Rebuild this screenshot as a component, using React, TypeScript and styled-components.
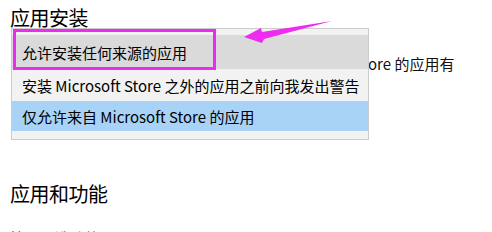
import React from 'react';
import styled, { createGlobalStyle } from 'styled-components';

const GlobalStyle = createGlobalStyle`
  html, body {
    margin: 0;
    padding: 0;
    background: #ffffff;
  }
  body {
    font-family: "Noto Sans CJK SC", "Noto Sans", "Liberation Sans", sans-serif;
    color: #000;
  }
`;

const Page = styled.div`
  position: relative;
  width: 492px;
  height: 232px;
  overflow: hidden;
  padding: 0 0 0 10px;
  box-sizing: border-box;
`;

const Section = styled.section`
  display: flex;
  flex-direction: column;
`;

const Heading = styled.h2<{ $top: number }>`
  margin: ${p => p.$top}px 0 0;
  font-size: 20px;
  font-weight: 400;
  line-height: 26px;
  letter-spacing: -0.5px;
`;

const Description = styled.p`
  margin: 22px 0 0;
  padding-left: 2px;
  width: 445px;
  font-size: 15px;
  line-height: 22px;
  color: #111;
`;

const Link = styled.a`
  margin-top: 20px;
  font-size: 15px;
  line-height: 22px;
  color: #0063b1;
  text-decoration: none;
`;

const Dropdown = styled.ul`
  position: absolute;
  left: 11px;
  top: 28px;
  width: 356px;
  margin: 0;
  padding: 6px 0 8px;
  list-style: none;
  background: #f2f2f2;
  border: 1px solid #cccccc;
`;

const Option = styled.li<{ $state?: 'hover' | 'selected'; $h: number }>`
  height: ${p => p.$h}px;
  display: flex;
  align-items: center;
  padding: 0 10px;
  font-size: 15px;
  white-space: nowrap;
  background: ${p =>
    p.$state === 'hover' ? '#dadada' : p.$state === 'selected' ? '#a8d3f7' : 'transparent'};
`;

const Highlight = styled.div`
  position: absolute;
  left: 13px;
  top: 29px;
  width: 203px;
  height: 41px;
  box-sizing: border-box;
  border: 3px solid #ec2bee;
`;

const Arrow = styled.svg`
  position: absolute;
  left: 0;
  top: 0;
  pointer-events: none;
`;

export default function App() {
  return (
    <>
      <GlobalStyle />
      <Page>
        <Section>
          <Heading $top={5}>应用安装</Heading>
          <Description>选择你可以获取应用的位置。仅安装来自 Microsoft Store 的应用有助于保护你的设备。</Description>
        </Section>
        <Section>
          <Heading $top={84}>应用和功能</Heading>
          <Link href="#">管理可选功能</Link>
        </Section>

        <Dropdown>
          <Option $state="hover" $h={34}>允许安装任何来源的应用</Option>
          <Option $h={32}>安装 Microsoft Store 之外的应用之前向我发出警告</Option>
          <Option $state="selected" $h={30}>仅允许来自 Microsoft Store 的应用</Option>
        </Dropdown>

        <Highlight />
        <Arrow width="492" height="232" viewBox="0 0 492 232">
          <polygon
            points="244,37 261,28 262,32 332,21 264,39 262,43"
            fill="#ef2bef"
          />
        </Arrow>
      </Page>
    </>
  );
}
